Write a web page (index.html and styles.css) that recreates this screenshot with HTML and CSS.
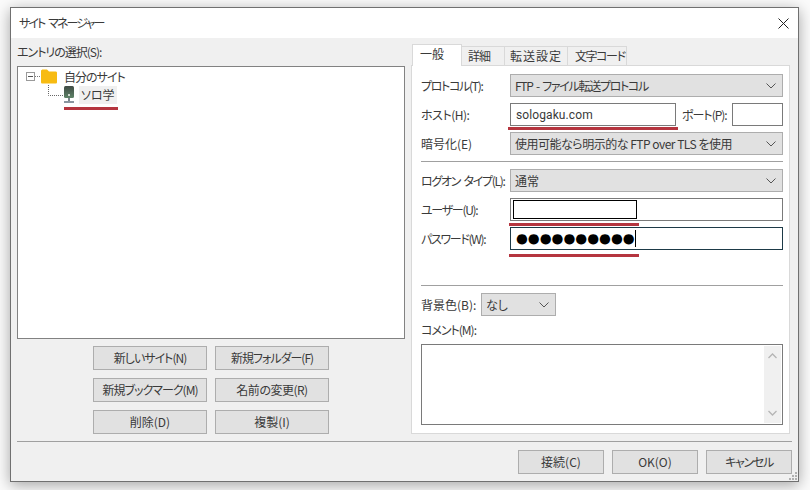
FILE: index.html
```html
<!DOCTYPE html>
<html lang="ja">
<head>
<meta charset="utf-8">
<title>サイトマネージャー</title>
<link rel="stylesheet" href="styles.css">
</head>
<body>
<div class="window">
  <div class="titlebar">
    <span class="title-text">サイト マネージャー</span>
    <svg class="close" width="11" height="11" viewBox="0 0 11 11"><path d="M0.5 0.5L10.5 10.5M10.5 0.5L0.5 10.5" stroke="#222" stroke-width="1" fill="none"/></svg>
  </div>
  <div class="main">
    <div class="left">
      <div class="entry-label tight-2">エントリの選択(S):</div>
      <div class="tree">
        <div class="tree-row">
          <svg class="expander" width="31" height="20" viewBox="0 0 31 20">
            <rect x="0.5" y="5.5" width="8" height="8" fill="#fff" stroke="#9a9a9a"/>
            <path d="M2 9.5H7" stroke="#555"/>
            <path d="M9 9.5H15" stroke="#777" stroke-dasharray="1 1"/>
            <path d="M15 4C15 3 16 2.500 17 2.500H21L23 4.500H29.500C30.500 4.500 31 5 31 6V15C31 16 30.500 16.500 29.500 16.500H16.500C15.500 16.500 15 16 15 15Z" fill="#f7bb12"/>
          </svg>
          <span class="tree-text tight-2">自分のサイト</span>
        </div>
        <div class="tree-row child">
          <svg class="server" width="30" height="20" viewBox="0 0 30 20">
            <defs>
              <linearGradient id="srv" x1="0" y1="0" x2="0" y2="1">
                <stop offset="0" stop-color="#3f4a44"/>
                <stop offset="1" stop-color="#5f8468"/>
              </linearGradient>
            </defs>
            <path d="M0.500 0V10.500H15" stroke="#666" stroke-dasharray="1 1" fill="none"/>
            <rect x="16" y="1" width="10" height="12" rx="1.500" fill="url(#srv)"/>
            <rect x="20" y="9" width="2" height="2" fill="#cfd8d0"/>
            <rect x="20" y="13" width="2" height="3" fill="#7a858c"/>
            <rect x="16" y="16" width="10" height="2" fill="#8a96a0"/>
          </svg>
          <span class="tree-text selected">ソロ学</span>
        </div>
        <div class="mark mark-tree"></div>
      </div>
      <div class="site-buttons">
        <div class="btn tight-2">新しいサイト(N)</div>
        <div class="btn tight-2">新規フォルダー(F)</div>
        <div class="btn tight-2">新規ブックマーク(M)</div>
        <div class="btn tight-1">名前の変更(R)</div>
        <div class="btn">削除(D)</div>
        <div class="btn">複製(I)</div>
      </div>
    </div>
    <div class="right">
      <div class="tabs">
        <div class="tab active">一般</div>
        <div class="tab t2">詳細</div>
        <div class="tab t3">転送設定</div>
        <div class="tab t4">文字コード</div>
      </div>
      <div class="panel">
        <div class="row">
          <label class="tight-3">プロトコル(T):</label>
          <div class="select grow"><span class="spaced">FTP - ファイル転送プロトコル</span><svg width="10" height="6" viewBox="0 0 10 6"><path d="M0.5 0.5L5 5L9.5 0.5" fill="none" stroke="#555"/></svg></div>
        </div>
        <div class="row">
          <label class="tight-1">ホスト(H):</label>
          <div class="input host">sologaku.com</div>
          <label class="port-label tight-2">ポート(P):</label>
          <div class="input port"></div>
          <div class="mark mark-host"></div>
        </div>
        <div class="row">
          <label>暗号化(E)</label>
          <div class="select grow"><span class="tight-1">使用可能なら明示的な FTP over TLS を使用</span><svg width="10" height="6" viewBox="0 0 10 6"><path d="M0.5 0.5L5 5L9.5 0.5" fill="none" stroke="#555"/></svg></div>
        </div>
        <div class="sep"></div>
        <div class="row">
          <label class="spaced">ログオン タイプ(L):</label>
          <div class="select grow"><span>通常</span><svg width="10" height="6" viewBox="0 0 10 6"><path d="M0.5 0.5L5 5L9.5 0.5" fill="none" stroke="#555"/></svg></div>
        </div>
        <div class="row">
          <label class="tight-3">ユーザー(U):</label>
          <div class="input grow user"><div class="redacted"></div></div>
          <div class="mark mark-user"></div>
        </div>
        <div class="row">
          <label class="tight-3">パスワード(W):</label>
          <div class="input grow pass"><span class="dots">●●●●●●●●●●</span><span class="caret"></span></div>
          <div class="mark mark-pass"></div>
        </div>
        <div class="sep sep-wide"></div>
        <div class="row">
          <label class="bg-label">背景色(B):</label>
          <div class="select bg"><span>なし</span><svg width="10" height="6" viewBox="0 0 10 6"><path d="M0.5 0.5L5 5L9.5 0.5" fill="none" stroke="#555"/></svg></div>
        </div>
        <div class="comment-label tight-2">コメント(M):</div>
        <div class="comment">
          <div class="scrollbar">
            <svg width="9" height="6" viewBox="0 0 9 6"><path d="M0.5 5L4.5 1L8.5 5" fill="none" stroke="#b5b5b5" stroke-width="1.3"/></svg>
            <svg width="9" height="6" viewBox="0 0 9 6"><path d="M0.5 1L4.5 5L8.5 1" fill="none" stroke="#b5b5b5" stroke-width="1.3"/></svg>
          </div>
        </div>
      </div>
    </div>
  </div>
  <div class="footer">
    <div class="btn wide">接続(C)</div>
    <div class="btn wide">OK(O)</div>
    <div class="btn wide tight-3">キャンセル</div>
    <svg class="grip" width="9" height="9" viewBox="0 0 9 9" fill="#b0b0b0"><rect x="6" y="0" width="2" height="2"/><rect x="3" y="3" width="2" height="2"/><rect x="6" y="3" width="2" height="2"/><rect x="0" y="6" width="2" height="2"/><rect x="3" y="6" width="2" height="2"/><rect x="6" y="6" width="2" height="2"/></svg>
  </div>
</div>
</body>
</html>
```
FILE: styles.css
```css
* { box-sizing: border-box; }
html, body { margin: 0; padding: 0; }
body {
  width: 810px;
  height: 490px;
  overflow: hidden;
  background: #fbfbfb;
  font-family: "Noto Sans CJK JP", "Noto Sans", sans-serif;
  font-size: 12px;
  font-feature-settings: "palt";
  line-height: 16px;
  color: #3a3a3a;
}
.tight-1 { letter-spacing: -0.5px; }
.tight-2 { letter-spacing: -1px; }
.tight-3 { letter-spacing: -1.3px; }
.spaced { letter-spacing: -1.3px; word-spacing: 2px; }
.title-text { letter-spacing: -1.9px; word-spacing: 3px; }
.window {
  position: relative;
  margin: 7px 0 0 10px;
  width: 789px;
  height: 475px;
  border: 1px solid #707070;
  background: #f0f0f0;
  box-shadow: 0 3px 14px rgba(0, 0, 0, .35);
  display: flex;
  flex-direction: column;
}
.titlebar {
  height: 30px;
  flex: none;
  background: #fff;
  display: flex;
  align-items: center;
  justify-content: space-between;
  padding: 0 9px 0 8px;
}
.main {
  height: 403px;
  flex: none;
  display: flex;
  gap: 6px;
  padding: 6px 7px 7px 6px;
}
.left { width: 388px; flex: none; display: flex; flex-direction: column; }
.entry-label { height: 22px; }
.tree {
  position: relative;
  height: 273px;
  flex: none;
  background: #fff;
  border: 1px solid #828282;
  padding: 1px 0 0 8px;
}
.tree-row { display: flex; align-items: center; height: 18px; }
.expander { flex: none; margin-right: 5px; }
.child { padding-left: 22px; }
.server { flex: none; margin-right: 1px; }
.tree-text { padding: 0 2px; line-height: 18px; }
.selected { background: #f0f0f0; }
.mark { position: absolute; height: 3px; background: #b5353f; }
.mark-tree { left: 46px; top: 40px; width: 54px; }
.site-buttons {
  display: grid;
  grid-template-columns: 114px 114px;
  grid-auto-rows: 24px;
  gap: 8px;
  justify-content: center;
  margin-top: 7px;
}
.btn {
  background: #e1e1e1;
  border: 1px solid #adadad;
  display: flex;
  align-items: center;
  justify-content: center;
  white-space: nowrap;
  padding-bottom: 1px;
}
.right { width: 379px; flex: none; display: flex; flex-direction: column; }
.tabs { height: 21px; display: flex; align-items: flex-end; padding-left: 1px; flex: none; }
.tab {
  height: 19px;
  background: #f0f0f0;
  border: 1px solid #d9d9d9;
  border-bottom: 0;
  border-left: 0;
  display: flex;
  align-items: center;
  white-space: nowrap;
}
.tab.active {
  width: 50px;
  height: 22px;
  margin-bottom: -1px;
  padding: 0 0 3px 7px;
  background: #fff;
  border-left: 1px solid #d9d9d9;
  position: relative;
  z-index: 1;
}
.t2 { width: 43px; padding-left: 6px; letter-spacing: -1px; }
.t3 { width: 63px; padding-left: 5px; letter-spacing: 1px; }
.t4 { width: 59px; padding-left: 7px; letter-spacing: -1.4px; }
.panel {
  flex: 1;
  background: #fff;
  border: 1px solid #d9d9d9;
  padding: 8px 6px 8px 9px;
  display: flex;
  flex-direction: column;
  gap: 6px;
}
.row { position: relative; display: flex; align-items: center; height: 23px; flex: none; }
.row label { width: 89px; flex: none; white-space: nowrap; }
.select {
  height: 23px;
  background: #e1e1e1;
  border: 1px solid #adadad;
  display: flex;
  align-items: center;
  justify-content: space-between;
  padding: 0 6px 0 4px;
}
.grow { flex: 1; }
.input { height: 23px; background: #fff; border: 1px solid #7a7a7a; display: flex; align-items: center; }
.host { width: 166px; flex: none; padding-left: 5px; font-family: "Roboto", sans-serif; font-size: 12px; letter-spacing: .1px; }
.row .port-label { width: 56px; padding-left: 6px; }
.port { width: 51px; flex: none; }
.user { padding-left: 2px; }
.redacted { width: 124px; height: 19px; background: #fff; border: 1px solid #000; }
.pass { border-color: #1d3a47; padding-left: 5px; overflow: hidden; }
.dots { font-family: "DejaVu Sans", sans-serif; font-size: 13.6px; color: #000; line-height: 21px; }
.caret { width: 1px; height: 17px; background: #000; }
.mark-host { left: 87px; top: 24px; width: 170px; }
.mark-user { left: 88px; top: 25px; width: 130px; }
.mark-pass { left: 88px; top: 27px; width: 130px; }
.sep { height: 1px; background: #a0a0a0; flex: none; margin-bottom: 1px; }
.sep-wide { margin-top: 29px; }
.row .bg-label { width: 60px; }
.bg { width: 75px; }
.comment-label { height: 16px; flex: none; }
.comment {
  height: 81px;
  flex: none;
  background: #fff;
  border: 1px solid #7a7a7a;
  display: flex;
  justify-content: flex-end;
  padding: 1px;
}
.scrollbar {
  width: 17px;
  background: #f0f0f0;
  display: flex;
  flex-direction: column;
  align-items: center;
  justify-content: space-between;
  padding: 7px 0;
}
.footer {
  position: relative;
  flex: 1;
  margin: 0 6px 0 6px;
  border-top: 1px solid #a0a0a0;
  padding-top: 8px;
  display: flex;
  justify-content: flex-end;
  align-items: flex-start;
  gap: 8px;
}
.wide { width: 86px; height: 24px; }
.grip { position: absolute; right: -6px; bottom: 0; }
```
